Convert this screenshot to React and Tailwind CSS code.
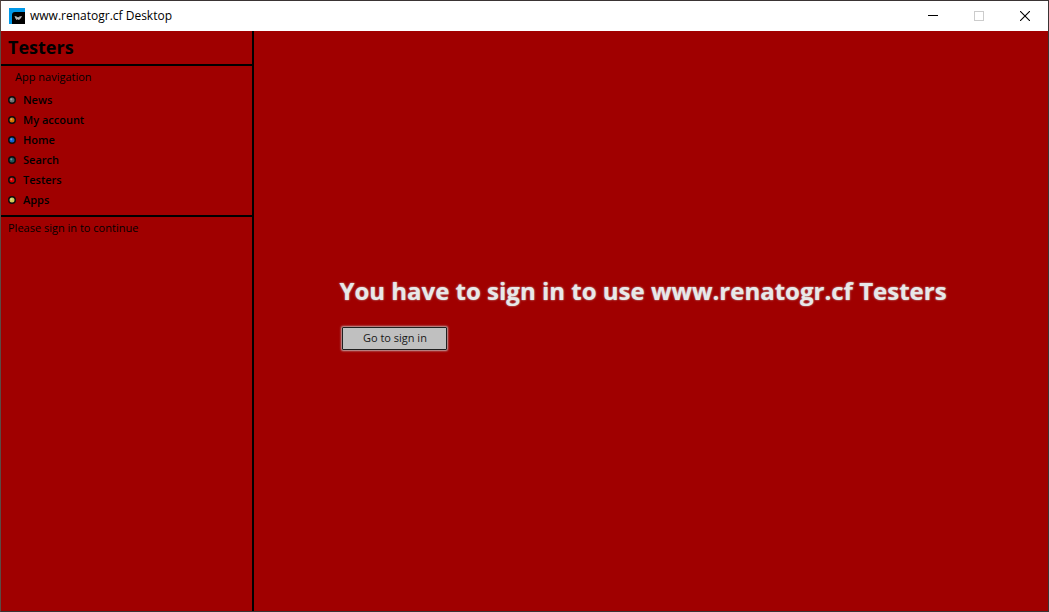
const navItems = [
  { label: "News", color: "#707070" },
  { label: "My account", color: "#d87000" },
  { label: "Home", color: "#1060d0" },
  { label: "Search", color: "#245458" },
  { label: "Testers", color: "#d80000" },
  { label: "Apps", color: "#d0c858" },
];

function AppIcon() {
  return (
    <svg width="16" height="16" viewBox="0 0 16 16" aria-hidden="true">
      <rect width="16" height="16" fill="#0098e8" />
      <path d="M3 16V7Q3 4 6 4H16V16Z" fill="#000" />
      <path d="M5.500 8l2 .5 1.500 1 1.500-1 2.500-.5-1 2-2 2-1.500-.8L7.500 12 6.500 10.500Z" fill="#bdbdbd" />
      <path d="M7.500 9.500v1M10.500 9v1.500" stroke="#999" strokeWidth=".7" />
    </svg>
  );
}

function Bullet({ color }) {
  return (
    <svg width="8" height="8" viewBox="0 0 8 8" className="shrink-0" aria-hidden="true">
      <circle cx="4" cy="4" r="4" fill="#0c0c0c" />
      <circle cx="4" cy="4" r="2.500" fill={color} />
      <circle cx="3.300" cy="3.300" r="1.100" fill="#fff" opacity=".35" />
    </svg>
  );
}

function TitleBar() {
  return (
    <header className="flex h-[30px] shrink-0 items-center bg-white text-black">
      <div className="flex flex-1 items-center gap-[5px] pl-2">
        <AppIcon />
        <span className="text-[12px] leading-4">www.renatogr.cf Desktop</span>
      </div>
      <button aria-label="Minimize" className="flex h-full w-[46px] items-center justify-center">
        <svg width="10" height="10" viewBox="0 0 10 10" shapeRendering="crispEdges">
          <path d="M0 4.500H10" stroke="#000" />
        </svg>
      </button>
      <button aria-label="Maximize" disabled className="flex h-full w-[46px] items-center justify-center">
        <svg width="10" height="10" viewBox="0 0 10 10" shapeRendering="crispEdges">
          <rect x=".5" y=".5" width="9" height="9" fill="none" stroke="#ccc" />
        </svg>
      </button>
      <button aria-label="Close" className="flex h-full w-[46px] items-center justify-center">
        <svg width="10" height="10" viewBox="0 0 10 10">
          <path d="M0 0L10 10M10 0L0 10" stroke="#000" strokeWidth="1.100" />
        </svg>
      </button>
    </header>
  );
}

export default function App() {
  return (
    <div className="flex min-h-screen flex-col border border-[#3a3434] border-l-[#5c4a44] bg-[#a00000] font-['Open_Sans','Noto_Sans',sans-serif] text-black">
      <TitleBar />
      <div className="flex flex-1">
        <aside className="w-[253px] shrink-0 border-r-2 border-black text-[11px]">
          <h1 className="border-b-2 border-black px-[7px] pt-[2px] pb-[2px] text-[18px] leading-[29px] font-bold">Testers</h1>
          <nav aria-label="App navigation" className="border-b-2 border-black pb-[5px]">
            <p className="px-[14px] pt-[3px] pb-[5px] leading-4">App navigation</p>
            <ul>
              {navItems.map((item) => (
                <li key={item.label}>
                  <a href="#" className="flex h-5 items-center gap-[7px] pl-[7px] font-semibold">
                    <Bullet color={item.color} />
                    {item.label}
                  </a>
                </li>
              ))}
            </ul>
          </nav>
          <p className="px-[7px] py-[3px] leading-4">Please sign in to continue</p>
        </aside>
        <main className="flex flex-1 items-center justify-center pr-4 pb-5">
          <div>
            <h2 className="text-[24px] leading-9 font-bold text-[#e8e8e8] [text-shadow:0_0_2px_#c8c8c8]">
              You have to sign in to use www.renatogr.cf Testers
            </h2>
            <button className="mt-[18px] ml-[3px] h-[23px] w-[105px] rounded-[1px] border border-[#202020] bg-[#c0c0c0] text-[11px] leading-4 text-[#181818] shadow-[0_0_2px_1px_#c0a8a8]">
              Go to sign in
            </button>
          </div>
        </main>
      </div>
    </div>
  );
}
